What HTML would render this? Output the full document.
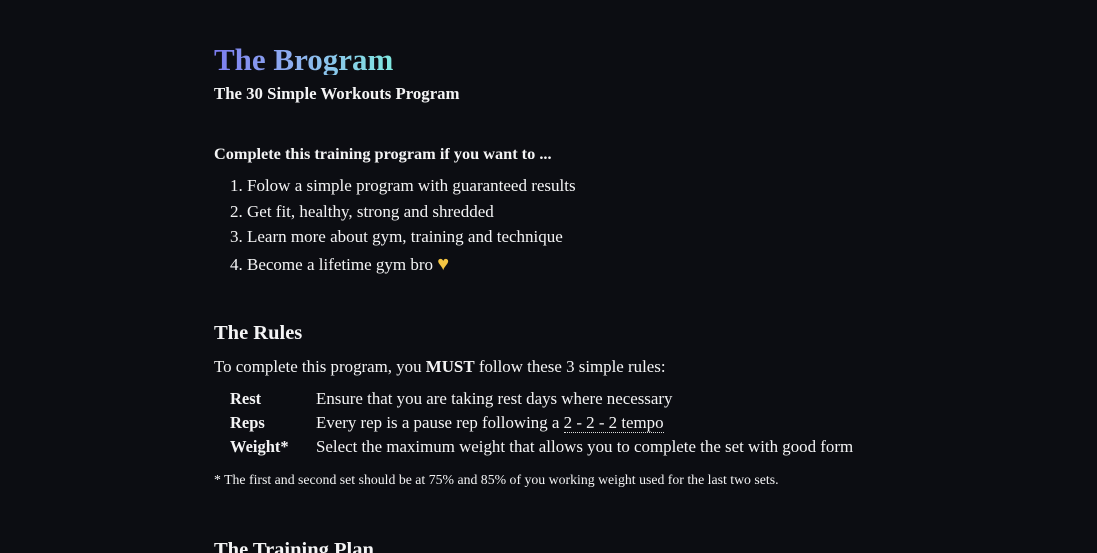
<!DOCTYPE html>
<html><head><meta charset="utf-8"><style>
html,body{margin:0;padding:0;background:#0c0d12;width:1097px;height:553px;overflow:hidden}
body{font-family:"Liberation Serif",serif;color:#f4f4f5;position:relative}
.a{position:absolute;white-space:nowrap;line-height:1}
h1{position:absolute;left:214px;top:44px;margin:0;font-size:31px;font-weight:bold;line-height:1;
background:linear-gradient(90deg,#7c7cf0,#8fb0f0 45%,#7fe8e0);-webkit-background-clip:text;background-clip:text;color:transparent}
.b{font-weight:bold}
.dot{border-bottom:1px dotted #ddd}
</style></head><body>
<h1>The Brogram</h1>
<div class="a b" style="left:214px;top:86px;font-size:16.8px">The 30 Simple Workouts Program</div>
<div class="a b" style="left:214px;top:146px;font-size:16.3px">Complete this training program if you want to ...</div>
<div class="a" style="left:230px;top:177px;font-size:17px">1. Folow a simple program with guaranteed results</div>
<div class="a" style="left:230px;top:203px;font-size:17px">2. Get fit, healthy, strong and shredded</div>
<div class="a" style="left:230px;top:228px;font-size:17px">3. Learn more about gym, training and technique</div>
<div class="a" style="left:230px;top:254px;font-size:17px">4. Become a lifetime gym bro <span style="color:#f5c542;font-size:20px">&#9829;</span></div>
<div class="a b" style="left:214px;top:323px;font-size:20.5px">The Rules</div>
<div class="a" style="left:214px;top:359px;font-size:16.9px">To complete this program, you <b>MUST</b> follow these 3 simple rules:</div>
<div class="a b" style="left:230px;top:391px;font-size:16.5px">Rest</div>
<div class="a" style="left:316px;top:391px;font-size:16.9px">Ensure that you are taking rest days where necessary</div>
<div class="a b" style="left:230px;top:415px;font-size:16.5px">Reps</div>
<div class="a" style="left:316px;top:415px;font-size:16.9px">Every rep is a pause rep following a <span class="dot">2 - 2 - 2 tempo</span></div>
<div class="a b" style="left:230px;top:439px;font-size:16.5px">Weight*</div>
<div class="a" style="left:316px;top:439px;font-size:16.9px">Select the maximum weight that allows you to complete the set with good form</div>
<div class="a" style="left:214px;top:473px;font-size:13.8px">* The first and second set should be at 75% and 85% of you working weight used for the last two sets.</div>
<div class="a b" style="left:214px;top:540px;font-size:20.5px">The Training Plan</div>
</body></html>
